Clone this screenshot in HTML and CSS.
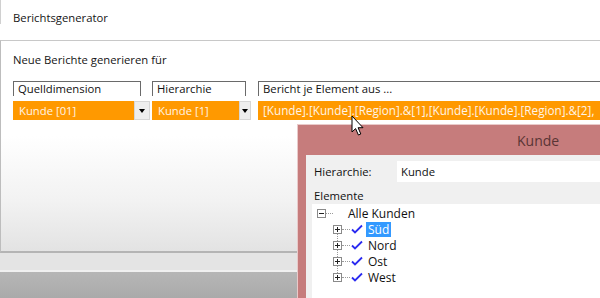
FILE: index.html
```html
<!DOCTYPE html>
<html lang="de">
<head>
<meta charset="utf-8">
<title>Berichtsgenerator</title>
<link rel="stylesheet" href="styles.css">
</head>
<body>
<div class="app">
  <header class="titlebar">
    <span class="title-text">Berichtsgenerator</span>
  </header>
  <section class="panel">
    <h2 class="panel-title">Neue Berichte generieren für</h2>
    <div class="cols">
      <div class="col col-1">
        <div class="col-head">Quelldimension</div>
        <div class="combo">
          <span class="combo-value">Kunde [01]</span>
          <span class="combo-btn"><span class="tri"></span></span>
        </div>
      </div>
      <div class="col col-2">
        <div class="col-head">Hierarchie</div>
        <div class="combo">
          <span class="combo-value">Kunde [1]</span>
          <span class="combo-btn"><span class="tri"></span></span>
        </div>
      </div>
      <div class="col col-3">
        <div class="col-head open">Bericht je Element aus ...</div>
        <div class="combo">
          <span class="combo-value long">[Kunde].[Kunde].[Region].&amp;[1],[Kunde].[Kunde].[Region].&amp;[2],</span>
        </div>
      </div>
    </div>
  </section>
  <div class="statusbar"></div>
  <div class="taskbar"></div>

  <div class="dialog">
    <div class="dialog-title">Kunde</div>
    <div class="dialog-body">
      <div class="field-row">
        <span class="field-label">Hierarchie:</span>
        <span class="field-input">Kunde</span>
      </div>
      <div class="section-label">Elemente</div>
      <div class="tree">
        <div class="tree-row root">
          <svg class="exp" width="9" height="9" viewBox="0 0 9 9"><rect x="0.5" y="0.5" width="8" height="8" fill="#fff" stroke="#8a8a8a"/><path d="M2 4.5h5" stroke="#222"/></svg>
          <span class="dots root-dots"></span>
          <span class="tree-text root-text">Alle Kunden</span>
        </div>
        <div class="children">
          <div class="tree-row">
            <svg class="exp" width="9" height="9" viewBox="0 0 9 9"><rect x="0.5" y="0.5" width="8" height="8" fill="#fff" stroke="#8a8a8a"/><path d="M2 4.5h5M4.5 2v5" stroke="#222"/></svg>
            <span class="dots"></span>
            <svg class="check" width="12" height="10" viewBox="0 0 12 10"><path d="M1 5.5 L4 8.5 L11 1.5" fill="none" stroke="#2b2bf0" stroke-width="1.8"/></svg>
            <span class="tree-text selected">Süd</span>
          </div>
          <div class="tree-row">
            <svg class="exp" width="9" height="9" viewBox="0 0 9 9"><rect x="0.5" y="0.5" width="8" height="8" fill="#fff" stroke="#8a8a8a"/><path d="M2 4.5h5M4.5 2v5" stroke="#222"/></svg>
            <span class="dots"></span>
            <svg class="check" width="12" height="10" viewBox="0 0 12 10"><path d="M1 5.5 L4 8.5 L11 1.5" fill="none" stroke="#2b2bf0" stroke-width="1.8"/></svg>
            <span class="tree-text">Nord</span>
          </div>
          <div class="tree-row">
            <svg class="exp" width="9" height="9" viewBox="0 0 9 9"><rect x="0.5" y="0.5" width="8" height="8" fill="#fff" stroke="#8a8a8a"/><path d="M2 4.5h5M4.5 2v5" stroke="#222"/></svg>
            <span class="dots"></span>
            <svg class="check" width="12" height="10" viewBox="0 0 12 10"><path d="M1 5.5 L4 8.5 L11 1.5" fill="none" stroke="#2b2bf0" stroke-width="1.8"/></svg>
            <span class="tree-text">Ost</span>
          </div>
          <div class="tree-row">
            <svg class="exp" width="9" height="9" viewBox="0 0 9 9"><rect x="0.5" y="0.5" width="8" height="8" fill="#fff" stroke="#8a8a8a"/><path d="M2 4.5h5M4.5 2v5" stroke="#222"/></svg>
            <span class="dots"></span>
            <svg class="check" width="12" height="10" viewBox="0 0 12 10"><path d="M1 5.5 L4 8.5 L11 1.5" fill="none" stroke="#2b2bf0" stroke-width="1.8"/></svg>
            <span class="tree-text">West</span>
          </div>
        </div>
      </div>
    </div>
  </div>

  <svg class="cursor" width="14" height="22" viewBox="0 0 14 22">
    <path d="M1 1 L1 17 L4.6 13.6 L7.4 20 L9.8 19 L7.1 12.7 L12 12.7 Z" fill="#fff" stroke="#000" stroke-width="1" stroke-linejoin="miter"/>
  </svg>
</div>
</body>
</html>
```

FILE: styles.css
```css
* { box-sizing: border-box; }
html, body { margin: 0; padding: 0; }
body {
  width: 600px;
  height: 298px;
  overflow: hidden;
  background: #fff;
  font-family: "Open Sans", "Noto Sans", sans-serif;
  font-size: 11.3px;
  color: #111;
}
.app {
  position: relative;
  width: 600px;
  height: 298px;
  display: flex;
  flex-direction: column;
}
.titlebar {
  height: 40px;
  flex: none;
  padding: 10px 0 0 13px;
  line-height: 16px;
  background: linear-gradient(#d0d0d0, #d0d0d0) no-repeat 0 0 / 1px 24px, #fff;
}
.title-text { color: #151515; }
.panel {
  height: 213px;
  flex: none;
  border-top: 1px solid #c8c8c8;
  border-left: 1px solid #bdbdbd;
  border-bottom: 2px solid #b4b4b4;
  background: linear-gradient(#ffffff 0, #ffffff 95px, #f2f2f2 160px, #e3e3e3 210px);
  padding: 11px 0 0 12px;
}
.panel-title {
  margin: 0;
  font-size: 11.3px;
  font-weight: normal;
  line-height: 16px;
  color: #151515;
}
.cols {
  display: flex;
  margin-top: 13px;
}
.col { flex: none; display: flex; flex-direction: column; }
.col-1 { width: 137px; }
.col-2 { width: 99px; margin-left: 2px; }
.col-3 { width: 342px; margin-left: 7px; }
.col-head {
  height: 15px;
  border: 1px solid #6a6a6a;
  border-bottom: none;
  padding-left: 4px;
  line-height: 14px;
  color: #111;
  background: #fff;
}
.col-1 .col-head { width: 128px; }
.col-2 .col-head { width: 94px; }
.col-3 .col-head { border-right: none; }
.combo {
  margin-top: 5px;
  height: 19px;
  display: flex;
  background: #ff9900;
}
.combo-value {
  flex: 1;
  padding-left: 6px;
  line-height: 19px;
  color: #fff4e6;
  white-space: nowrap;
  overflow: hidden;
}
.combo-value.long { padding-left: 5px; font-size: 11.7px; }
.combo-btn {
  flex: none;
  width: 16px;
  background: #eeeeee;
  border: 1px solid #d6d6d6;
  display: flex;
  align-items: center;
  justify-content: center;
}
.col-2 .combo-btn { width: 12px; }
.tri {
  width: 0; height: 0;
  border-left: 3.5px solid transparent;
  border-right: 3.5px solid transparent;
  border-top: 4px solid #000;
}
.statusbar {
  height: 19px;
  flex: none;
  background: #e4e4e4;
  border-bottom: 2px solid #f0f0f0;
}
.taskbar {
  flex: 1;
  background: linear-gradient(#b6b6b6, #aaaaaa);
}

/* dialog */
.dialog {
  position: absolute;
  left: 297px;
  top: 124px;
  width: 303px;
  height: 174px;
  overflow: hidden;
  background: #c67c7c;
  border: 1px solid #e9caca;
  border-right: none;
  border-bottom: none;
  padding: 0 0 0 8px;
}
.dialog-title {
  height: 30px;
  padding-left: 211px;
  line-height: 32px;
  font-size: 14px;
  color: #5a3535;
}
.dialog-body {
  background: #f0f0f0;
  height: 150px;
  padding: 6px 0 0 6px;
}
.field-row {
  display: flex;
  align-items: center;
  height: 21px;
}
.field-label {
  width: 85px;
  padding-left: 2px;
}
.field-input {
  flex: 1;
  height: 21px;
  background: #fff;
  padding-left: 4px;
  line-height: 21px;
}
.section-label {
  margin-top: 6px;
  padding-left: 2px;
  line-height: 16px;
}
.tree {
  margin-top: 0;
  background: #fff;
  height: 100px;
  padding: 1px 0 0 5px;
}
.tree-row {
  display: flex;
  align-items: center;
  height: 16px;
}
.exp { flex: none; display: block; }
.dots {
  width: 8px;
  height: 0;
  border-top: 1px dotted #9a9a9a;
  flex: none;
}
.root-dots { width: 7px; }
.children {
  margin-left: 16px;
  position: relative;
}
.children::before {
  content: "";
  position: absolute;
  left: 4px;
  top: 8px;
  bottom: 8px;
  border-left: 1px dotted #9a9a9a;
}
.children .tree-row { position: relative; }
.check { flex: none; margin-left: 1px; display: block; }
.tree-text {
  margin-left: 3px;
  padding: 0 2px;
  line-height: 15px;
  font-size: 12px;
  color: #111;
}
.tree-text.root-text { margin-left: 13px; }
.tree-text.selected {
  background: #3399ff;
  color: #fff;
}
.cursor {
  position: absolute;
  left: 351px;
  top: 115px;
}
```
